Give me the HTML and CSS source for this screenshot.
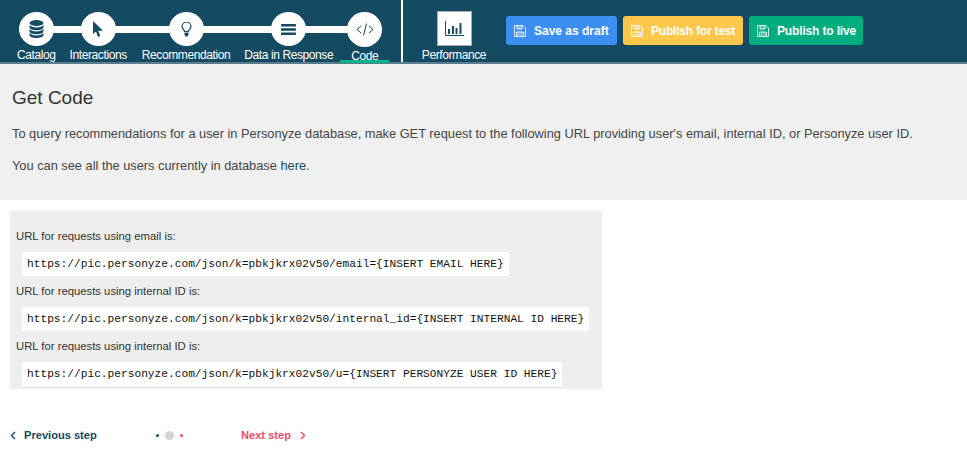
FILE: index.html
```html
<!DOCTYPE html>
<html lang="en">
<head>
<meta charset="utf-8">
<title>Get Code</title>
<link rel="stylesheet" href="styles.css">
</head>
<body>
<header class="topbar">
  <nav class="steps">
    <div class="track"></div>
    <a class="step">
      <span class="circle"><svg width="15" height="18" viewBox="0 0 15 18"><g fill="#154a63"><ellipse cx="7.500" cy="3" rx="7" ry="3"/><path d="M.5 5c1.200 1.700 3.700 2.400 7 2.400s5.800-.7 7-2.400v2.200c0 1.700-3 3-7 3s-7-1.300-7-3z"/><path d="M.5 9c1.200 1.700 3.700 2.400 7 2.400s5.800-.7 7-2.400v2.200c0 1.700-3 3-7 3s-7-1.300-7-3z"/><path d="M.5 13c1.200 1.700 3.700 2.400 7 2.400s5.800-.7 7-2.400v2c0 1.700-3 3-7 3s-7-1.300-7-3z"/></g></svg></span>
      <span class="label">Catalog</span>
    </a>
    <a class="step">
      <span class="circle"><svg width="12" height="17" viewBox="0 0 12 17"><path fill="#154a63" d="M1 0v13l3-2.600 2 5.600 2.300-.9-2.100-5.400H11z"/></svg></span>
      <span class="label">Interactions</span>
    </a>
    <a class="step">
      <span class="circle"><svg width="11" height="15" viewBox="0 0 11 15"><path fill="none" stroke="#154a63" stroke-width="1.200" d="M3.500 9.500c0-1.700-2.500-2.700-2.500-5a4.500 4.500 0 0 1 9 0c0 2.300-2.500 3.300-2.500 5z"/><path fill="#154a63" d="M3.500 10.500h4v2L6.500 14.500h-2l-1-2z"/></svg></span>
      <span class="label">Recommendation</span>
    </a>
    <a class="step">
      <span class="circle"><svg width="15" height="11" viewBox="0 0 15 11"><g fill="#154a63"><rect width="15" height="2.500" y="0" rx=".4"/><rect width="15" height="2.500" y="4.250" rx=".4"/><rect width="15" height="2.500" y="8.500" rx=".4"/></g></svg></span>
      <span class="label">Data in Response</span>
    </a>
    <a class="step step-active">
      <span class="circle"><svg width="18" height="13" viewBox="0 0 18 13"><path fill="none" stroke="#154a63" stroke-width="1" d="M5 3L1 6.500 5 10M13 3l4 3.500-4 3.500M10.500 .5L7.500 12.500"/></svg></span>
      <span class="label">Code</span>
    </a>
  </nav>
  <div class="divider"></div>
  <a class="perf">
    <span class="perf-box"><svg width="19" height="15" viewBox="0 0 19 15"><path fill="none" stroke="#154a63" d="M.5 0v14.500H19"/><g fill="#154a63"><rect x="3" y="8" width="2" height="5"/><rect x="7" y="5" width="2" height="8"/><rect x="10.500" y="7" width="2" height="6"/><rect x="14.500" y="2" width="2" height="11"/></g></svg></span>
    <span class="label">Performance</span>
  </a>
  <div class="actions">
    <button class="btn btn-draft"><svg class="disk" width="12" height="12" viewBox="0 0 12 12"><path fill="none" stroke="currentColor" d="M.5.500h8.500l2.500 2.500v8.500h-11z"/><path fill="currentColor" fill-opacity=".4" stroke="currentColor" d="M3 .500v3.500h5V.500M2.500 11.500V7h7v4.500"/></svg>Save as draft</button>
    <button class="btn btn-test"><svg class="disk" width="12" height="12" viewBox="0 0 12 12"><path fill="none" stroke="currentColor" d="M.5.500h8.500l2.500 2.500v8.500h-11z"/><path fill="currentColor" fill-opacity=".4" stroke="currentColor" d="M3 .500v3.500h5V.500M2.500 11.500V7h7v4.500"/></svg>Publish for test</button>
    <button class="btn btn-live"><svg class="disk" width="12" height="12" viewBox="0 0 12 12"><path fill="none" stroke="currentColor" d="M.5.500h8.500l2.500 2.500v8.500h-11z"/><path fill="currentColor" fill-opacity=".4" stroke="currentColor" d="M3 .500v3.500h5V.500M2.500 11.500V7h7v4.500"/></svg>Publish to live</button>
  </div>
</header>

<section class="intro">
  <h2 class="title">Get Code</h2>
  <p class="para">To query recommendations for a user in Personyze database, make GET request to the following URL providing user's email, internal ID, or Personyze user ID.</p>
  <p class="para">You can see all the users currently in database <a class="link">here</a>.</p>
</section>

<section class="codebox">
  <div class="code-label">URL for requests using email is:</div>
  <code class="code">https://pic.personyze.com/json/k=pbkjkrx02v50/email={INSERT EMAIL HERE}</code>
  <div class="code-label">URL for requests using internal ID is:</div>
  <code class="code">https://pic.personyze.com/json/k=pbkjkrx02v50/internal_id={INSERT INTERNAL ID HERE}</code>
  <div class="code-label">URL for requests using internal ID is:</div>
  <code class="code">https://pic.personyze.com/json/k=pbkjkrx02v50/u={INSERT PERSONYZE USER ID HERE}</code>
</section>

<footer class="pager">
  <a class="prev"><svg width="6" height="9" viewBox="0 0 6 9"><path fill="none" stroke="currentColor" stroke-width="1.400" d="M5 1L1.500 4.500 5 8"/></svg>Previous step</a>
  <div class="dots"><i class="dot dot-dark"></i><i class="dot dot-big"></i><i class="dot dot-red"></i></div>
  <a class="next">Next step<svg width="6" height="9" viewBox="0 0 6 9"><path fill="none" stroke="currentColor" stroke-width="1.400" d="M1 1l3.500 3.500L1 8"/></svg></a>
</footer>
</body>
</html>
```
FILE: styles.css
```css
* { box-sizing: border-box; }
html, body { margin: 0; padding: 0; }
body {
  background: #fff;
  color: #333;
  font-family: "Liberation Sans", Arial, sans-serif;
  font-size: 12px;
}
.topbar {
  display: flex;
  height: 64px;
  background: #154a63;
  border-bottom: 2px solid #5b7d8e;
  padding-left: 10px;
}
.steps {
  position: relative;
  display: flex;
  align-items: flex-start;
  width: 379px;
}
.track {
  position: absolute;
  left: 26px;
  right: 25px;
  top: 26px;
  height: 7px;
  background: #fff;
}
.step, .perf {
  position: relative;
  display: flex;
  flex-direction: column;
  align-items: center;
  height: 62px;
  padding: 12px 7px 0;
  color: #fff;
}
.step:nth-child(4) { margin-left: 1px; }
.step-active {
  width: 49px;
  height: 63px;
  box-shadow: inset 0 -3px 0 #00b386;
}
.circle {
  display: flex;
  align-items: center;
  justify-content: center;
  width: 35px;
  height: 35px;
  border-radius: 50%;
  background: #fff;
}
.label {
  margin-top: 2px;
  font-size: 12px;
  letter-spacing: -.4px;
  line-height: 14px;
  white-space: nowrap;
}
.divider {
  width: 2px;
  height: 62px;
  margin-left: 12px;
  background: #fff;
}
.perf {
  width: 102px;
  padding-top: 11px;
  box-shadow: 0 2px 0 #5b7d8e;
}
.perf-box {
  display: flex;
  align-items: center;
  justify-content: center;
  width: 35px;
  height: 35px;
  background: #fff;
  border: 1px solid #aaa;
}
.perf .label { margin-top: 2px; }
.actions {
  display: flex;
  gap: 6px;
  align-items: flex-start;
  padding-top: 16px;
  margin-left: 1px;
}
.btn {
  display: flex;
  align-items: center;
  height: 29px;
  padding: 0 7px;
  border: 1px solid transparent;
  border-radius: 3px;
  color: #fff;
  font-family: "Liberation Sans", Arial, sans-serif;
  font-size: 12px;
  font-weight: 700;
  white-space: nowrap;
}
.disk { flex: none; margin-right: 8px; opacity: .85; }
.btn-draft { background: #3c8ff0; width: 111px; }
.btn-test { background: #fcc74a; width: 120px; letter-spacing: -.2px; }
.btn-live { background: #00ad7e; width: 114px; letter-spacing: -.15px; }
.intro {
  height: 136px;
  background: #f0f0f0;
  padding: 22px 12px 0;
}
.title {
  margin: 0 0 15px;
  font-size: 19px;
  font-weight: 400;
  line-height: 24px;
  color: #333;
}
.para {
  margin: 0 0 15px;
  font-size: 12.8px;
  line-height: 17px;
  color: #444;
}
.link { color: #154a63; }
.codebox {
  width: 592px;
  height: 178px;
  margin: 11px 0 0 10px;
  padding: 18px 6px 0;
  background: #eee;
  font-size: 11.3px;
}
.code-label {
  line-height: 15px;
  color: #333;
}
.code {
  display: table;
  margin: 8px 0 8px 6px;
  padding: 0 5px;
  height: 24px;
  line-height: 24px;
  background: #fff;
  color: #111;
  font-family: "Liberation Mono", "Courier New", monospace;
  font-size: 11.2px;
}
.pager {
  display: flex;
  align-items: center;
  margin: 40px 0 0 10px;
  font-size: 11.1px;
  font-weight: 700;
}
.prev, .next { display: flex; align-items: center; }
.prev { color: #154a63; gap: 8px; width: 146px; }
.next { color: #ef4a66; gap: 9px; margin-left: 33px; }
.dots { display: flex; align-items: center; gap: 6px; width: 52px; }
.dot { display: block; border-radius: 50%; }
.dot-dark { width: 3px; height: 3px; background: #154a63; }
.dot-big { width: 9px; height: 9px; background: #d5d5d8; }
.dot-red { width: 3px; height: 3px; background: #ef4a66; }
```
